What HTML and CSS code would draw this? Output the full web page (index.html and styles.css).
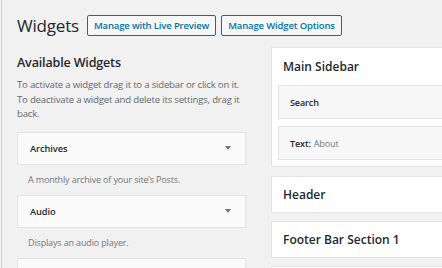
FILE: index.html
```html
<!DOCTYPE html>
<html lang="en">
<head>
    <meta charset="UTF-8">
    <meta name="viewport" content="width=device-width, initial-scale=1.0">
    <title>Widgets</title>
    <link rel="stylesheet" href="styles.css">
</head>
<body>
    <div class="wrap">
        <!-- Page title with the two action buttons -->
        <div class="page-head">
            <h1>Widgets</h1>
            <a class="title-action first">Manage with Live Preview</a>
            <a class="title-action">Manage Widget Options</a>
        </div>

        <div class="columns">
            <!-- Left column: list of available widgets -->
            <div class="available">
                <h2>Available Widgets</h2>
                <p class="help">To activate a widget drag it to a sidebar or click on it. To deactivate a widget and delete its settings, drag it back.</p>

                <div class="widget">
                    <div class="widget-top"><span>Archives</span><span class="arrow"></span></div>
                    <p class="widget-desc">A monthly archive of your site&#8217;s Posts.</p>
                </div>
                <div class="widget">
                    <div class="widget-top"><span>Audio</span><span class="arrow"></span></div>
                    <p class="widget-desc">Displays an audio player.</p>
                </div>
                <div class="widget">
                    <div class="widget-top"></div>
                </div>
            </div>

            <!-- Right column: the theme's widget areas -->
            <div class="sidebars">
                <div class="sidebar open">
                    <h3>Main Sidebar</h3>
                    <div class="in-widget"><b>Search</b></div>
                    <div class="in-widget"><b>Text:</b> <span class="in-title">About</span></div>
                </div>
                <div class="sidebar">
                    <h3>Header</h3>
                </div>
                <div class="sidebar">
                    <h3>Footer Bar Section 1</h3>
                </div>
                <div class="sidebar"></div>
            </div>
        </div>
    </div>
</body>
</html>
```

FILE: styles.css
```css
html, body {
    margin: 0;
    height: 100%;
    overflow: hidden;
}
body {
    background-color: #f1f1f1;
    font-family: "Open Sans", Arial, sans-serif;
    color: #23282d;
}
.wrap {
    height: 100%;
    border-left: 1px solid #d4d4d4;
    margin-left: 1px;
    padding-left: 15px;
}
.page-head {
    display: flex;
    align-items: center;
    padding-top: 15px;
    height: 21px;
}
h1 {
    font-size: 17px;
    font-weight: 400;
    margin: 0 8px 0 0;
    line-height: 21px;
    letter-spacing: -0.2px;
}
.title-action {
    box-sizing: border-box;
    height: 21px;
    line-height: 19px;
    padding: 0 6px;
    font-size: 9.5px;
    font-weight: 600;
    letter-spacing: -0.15px;
    color: #0073aa;
    border: 1px solid #0073aa;
    border-radius: 2px;
    background-color: #f7f7f7;
    white-space: nowrap;
}
.title-action.first {
    margin-right: 5px;
}
.columns {
    display: flex;
    margin-top: 11px;
}
.available {
    width: 229px;
    flex: none;
    margin-right: 25px;
}
h2 {
    font-size: 12.5px;
    font-weight: 600;
    line-height: 18px;
    letter-spacing: -0.15px;
    margin: 7px 0 0 0;
}
.help {
    font-size: 9.6px;
    line-height: 14.5px;
    letter-spacing: -0.2px;
    color: #646970;
    margin: 6px 0 10px 0;
}
.widget-top {
    box-sizing: border-box;
    height: 33px;
    display: flex;
    align-items: center;
    justify-content: space-between;
    padding: 0 12px;
    background-color: #fafafa;
    border: 1px solid #e2e4e7;
    font-size: 9.3px;
    font-weight: 600;
    letter-spacing: -0.1px;
}
.arrow {
    width: 0;
    height: 0;
    border-left: 3px solid transparent;
    border-right: 3px solid transparent;
    border-top: 4px solid #72777c;
    margin-right: 2px;
}
.widget-desc {
    font-size: 9px;
    line-height: 14px;
    letter-spacing: -0.15px;
    color: #72777c;
    margin: 0;
    padding: 8px 11px 8px 11px;
}
.sidebars {
    width: 200px;
    flex: none;
}
.sidebar {
    box-sizing: border-box;
    background-color: #fff;
    border: 1px solid #e2e4e7;
    margin-bottom: 8px;
    height: 37px;
}
.sidebar.open {
    height: 120px;
    padding: 0 0 7px 6px;
    margin-bottom: 9px;
}
h3 {
    font-size: 12px;
    font-weight: 600;
    line-height: 35px;
    margin: 0;
    padding-left: 11px;
}
.sidebar.open h3 {
    line-height: 37px;
    padding-left: 5px;
}
.in-widget {
    box-sizing: border-box;
    height: 34px;
    display: flex;
    align-items: center;
    padding-left: 11px;
    background-color: #f7f7f7;
    border: 1px solid #e2e4e7;
    font-size: 9px;
    letter-spacing: -0.1px;
    margin-bottom: 7px;
}
.in-widget b {
    font-weight: 600;
    margin-right: 3px;
}
.in-title {
    color: #72777c;
}
```
